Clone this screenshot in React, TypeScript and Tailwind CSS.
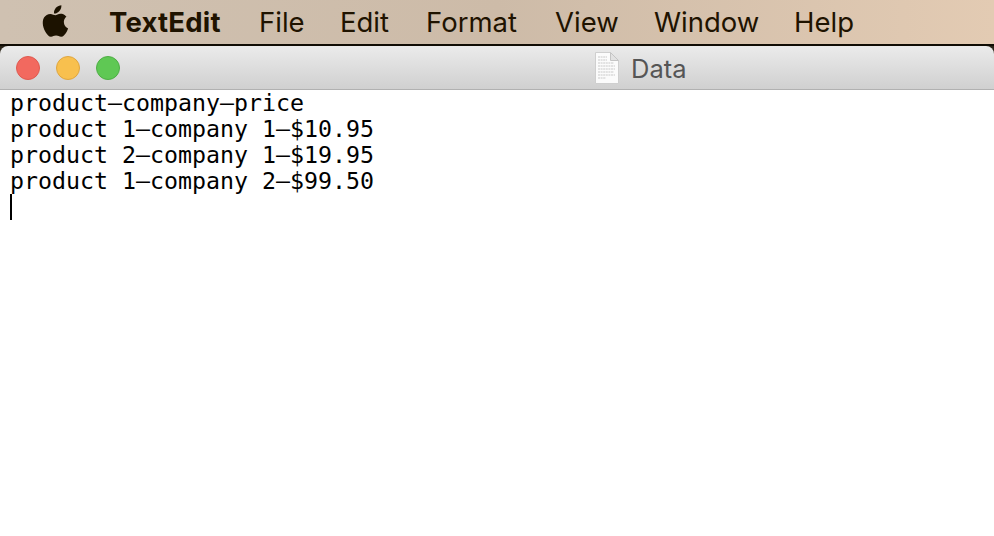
export default function App() {
  const menus = [
    { label: "File", w: "w-[81px]" },
    { label: "Edit", w: "w-[86px]" },
    { label: "Format", w: "w-[129px]" },
    { label: "View", w: "w-[99px]" },
    { label: "Window", w: "w-[140px]" },
    { label: "Help", w: "w-[80px]" },
  ];
  return (
    <div className="w-[994px] h-[536px] overflow-hidden bg-white flex flex-col font-['Inter',sans-serif]">
      <div className="h-[44px] shrink-0 flex items-center bg-gradient-to-r from-[#cfc1b1] via-[#cdbba8] to-[#e3cbb3] text-[#1f1300] text-[27.5px] leading-[34px] pl-[41px]">
        <svg width="28" height="34" viewBox="0 0 24 29" className="shrink-0 -mt-[3px]" fill="#1c1200">
          <path d="M17.5 1c.1 2-.6 3.600-1.700 4.900-1.200 1.400-2.900 2.400-4.700 2.200-.2-1.900.7-3.700 1.700-4.900C14 1.900 16 1.100 17.500 1z" />
          <path d="M22.600 10.200c-.2.100-3 1.700-3 5.200 0 4 3.500 5.400 3.600 5.500-.1.300-.6 2-1.800 3.800-1.100 1.600-2.300 3.200-4.100 3.200-1.800 0-2.300-1-4.400-1-2.100 0-2.700 1-4.300 1.100-1.800.1-3.100-1.700-4.200-3.300C2 21.400.3 15.500 2.600 11.600c1.100-2 3.200-3.200 5.400-3.200 1.700 0 3.300 1.100 4.300 1.100 1 0 2.800-1.400 4.800-1.200.8 0 3.200.3 4.700 2.500z" />
        </svg>
        <span className="font-bold ml-[40px] w-[150px] shrink-0 tracking-[0.2px]">TextEdit</span>
        {menus.map((m) => (
          <span key={m.label} className={`${m.w} shrink-0`}>{m.label}</span>
        ))}
      </div>
      <div className="h-[2px] shrink-0 bg-[#100c04]" />
      <div className="bg-[#2a2418]">
        <div className="h-[44px] rounded-t-[8px] border-b border-[#b1b1b1] bg-gradient-to-b from-[#ebebeb] to-[#d0d0d0] relative flex items-center pl-[16px] gap-[16px]">
          <div className="w-[24px] h-[24px] rounded-full bg-[#f2695f] border border-[#df5a50]" />
          <div className="w-[24px] h-[24px] rounded-full bg-[#f8c04e] border border-[#dfa640]" />
          <div className="w-[24px] h-[24px] rounded-full bg-[#5fc854] border border-[#4eae45]" />
          <div className="flex-1 flex items-center text-[25.5px] text-[#555555] pl-[459px] gap-[12px]">
            <svg width="24" height="32" viewBox="0 0 24 32" className="shrink-0">
              <path d="M.5.5h15l8 8v23H.500z" fill="#fbfbfb" stroke="#cfcfcf" />
              <path d="M15.500.5v8h8z" fill="#e2e2e2" stroke="#c4c4c4" />
              <path d="M3 5h9M3 8h9M3 11h16M3 14h17M3 17h17M3 20h16M3 23h17M3 26h8" stroke="#b5b5b5" strokeWidth=".7" strokeDasharray="2 .6" />
            </svg>
            <span className="pt-[3px]">Data</span>
          </div>
        </div>
      </div>
      <div className="flex-1 bg-white pl-[10px] font-['DejaVu_Sans_Mono',monospace] text-[23.25px] leading-[26px] text-black">
        <div>product–company–price</div>
        <div>product 1–company 1–$10.95</div>
        <div>product 2–company 1–$19.95</div>
        <div>product 1–company 2–$99.50</div>
        <div className="w-[2px] h-[26px] bg-black" />
      </div>
    </div>
  );
}
